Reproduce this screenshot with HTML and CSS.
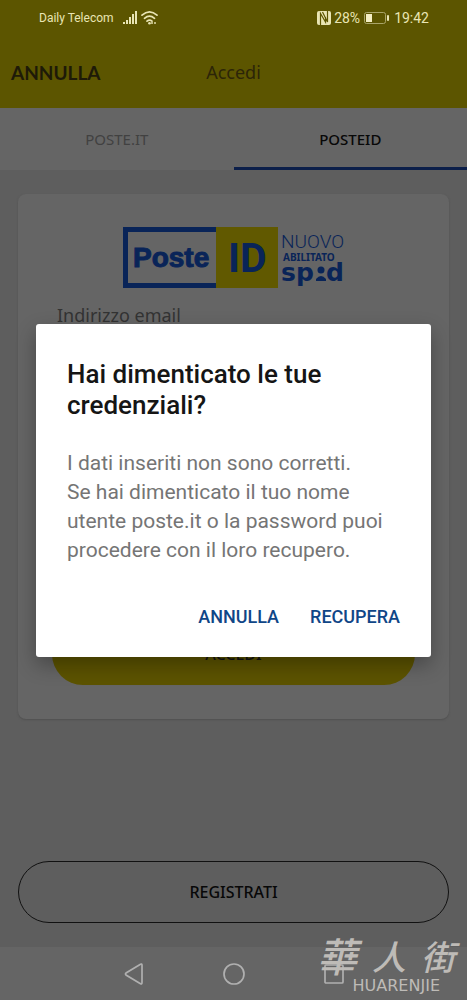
FILE: index.html
```html
<!DOCTYPE html>
<html lang="it">
<head>
<meta charset="utf-8">
<meta name="viewport" content="width=device-width, initial-scale=1">
<title>Accedi</title>
<link rel="stylesheet" href="styles.css">
</head>
<body>
<div class="screen">
  <header class="top">
    <div class="status">
      <span class="carrier">Daily Telecom</span>
      <svg class="signal" width="35" height="16" viewBox="0 0 35 16" aria-hidden="true">
        <g fill="#e9e5b4"><rect x="0" y="12" width="2" height="2"/><rect x="3" y="10" width="2" height="4"/><rect x="6" y="7" width="2" height="7"/><rect x="9" y="4" width="2" height="10"/><rect x="12" y="1" width="2" height="13"/></g>
        <g fill="none" stroke="#e9e5b4" stroke-width="1.7" stroke-linecap="round"><path d="M19 5.2Q26.500-1.500 34 5.200M21.500 8.300Q26.500 4 31.500 8.300M24 11.200Q26.500 9 29 11.200"/></g>
        <circle cx="26.500" cy="13.200" r="1.300" fill="#e9e5b4"/><path d="M29 14v-2M32 14v-2" stroke="#e9e5b4" stroke-width="1.400"/>
      </svg>
      <span class="spacer"></span>
      <svg width="14" height="14" viewBox="0 0 14 14" aria-hidden="true">
        <rect width="14" height="14" rx="2" fill="#e9e5b4"/>
        <path d="M3.500 14V2.500L8.500 11V6M5.500 1L10.500 11V0" fill="none" stroke="#5c5500" stroke-width="1.200"/>
      </svg>
      <span class="pct">28%</span>
      <svg class="battery" width="26" height="12" viewBox="0 0 26 12" aria-hidden="true">
        <rect x=".5" y=".5" width="21" height="11" rx="2" fill="none" stroke="#a9a468"/>
        <rect x="2" y="2" width="6" height="8" fill="#f4eec4"/><rect x="23" y="3" width="2" height="6" rx="1" fill="#e9e5b4"/>
      </svg>
      <span class="clock">19:42</span>
    </div>
    <div class="appbar">
      <button class="cancel" type="button">ANNULLA</button>
      <h1 class="title">Accedi</h1>
    </div>
  </header>
  <nav class="tabs">
    <button class="tab" type="button">POSTE.IT</button>
    <button class="tab tab-active" type="button">POSTEID</button>
  </nav>
  <main class="content">
    <form class="card">
      <svg class="brand" width="222" height="62" viewBox="0 0 222 62" role="img" aria-label="PosteID">
        <path d="M93 2.500H2.500V58.500H93" fill="none" stroke="#092458" stroke-width="5"/>
        <rect x="93" y="0" width="62" height="61" fill="#615900"/>
        <g fill="#092458">
          <text class="logo-poste" x="10" y="40">Poste</text>
          <text class="logo-id" x="105" y="45">ID</text>
          <text class="logo-nuovo" x="158" y="21">NUOVO</text>
          <text class="logo-abil" x="160" y="34">ABILITATO</text>
          <text class="logo-spid" x="158" y="54">sp</text>
          <text class="logo-spid" x="203" y="54">d</text>
          <circle cx="198" cy="43" r="3.500"/><path d="M193 54v-2q5-6 10 0v2z"/>
        </g>
      </svg>
      <label class="field-label" for="email">Indirizzo email</label>
      <input class="field" id="email" type="email">
      <button class="login" type="button">ACCEDI</button>
    </form>
    <button class="register" type="button">REGISTRATI</button>
  </main>
  <footer class="sysnav">
    <svg width="20" height="24" viewBox="0 0 20 24" aria-hidden="true"><path d="M18 3V20.500Q18 22.500 16.500 21.700L2 13Q1 12 2 11L16.500 2.300Q18 1.500 18 3" fill="none" stroke="#b0b0b0" stroke-width="1.700"/></svg>
    <svg width="24" height="24" viewBox="0 0 24 24" aria-hidden="true"><circle cx="12" cy="12" r="10" fill="none" stroke="#b0b0b0" stroke-width="1.700"/></svg>
    <svg width="20" height="24" viewBox="0 0 20 24" aria-hidden="true"><rect x="1" y="3" width="18" height="18" rx="1" fill="none" stroke="#b0b0b0" stroke-width="1.700"/></svg>
  </footer>
  <div class="watermark"><span class="wm-cjk" lang="zh-Hant"><span class="wm-big">華</span><span>人</span><span>街</span></span><span class="wm-latin">HUARENJIE</span></div>
  <div class="overlay">
    <section class="dialog" role="alertdialog" aria-labelledby="dlg-title" aria-describedby="dlg-text">
      <h2 class="dialog-title" id="dlg-title">Hai dimenticato le tue credenziali?</h2>
      <p class="dialog-text" id="dlg-text">I dati inseriti non sono corretti.<br>Se hai dimenticato il tuo nome utente poste.it o la password puoi procedere con il loro recupero.</p>
      <div class="dialog-actions">
        <button class="action" type="button">ANNULLA</button>
        <button class="action" type="button">RECUPERA</button>
      </div>
    </section>
  </div>
</div>
</body>
</html>
```

FILE: styles.css
```css
* { box-sizing: border-box; }
body { margin: 0; background: #5e5e5e; font-family: "Noto Sans", sans-serif; color: #151515; }
button { border: 0; padding: 0; background: none; color: inherit; font: inherit; cursor: pointer; }
h1, h2, p { margin: 0; }
.screen { position: relative; min-height: 100vh; display: flex; flex-direction: column; }
.top { background: #5c5500; }
.status { display: flex; align-items: center; height: 36px; padding: 0 38px 0 39px; font-family: Roboto, sans-serif; font-size: 14px; color: #e9e5b4; }
.carrier { font-size: 12px; }
.signal { margin-left: 9px; }
.spacer { flex: 1; }
.pct { margin-left: 3px; }
.battery { margin: 0 4px; }
.appbar { display: grid; grid-template-columns: 1fr auto 1fr; align-items: center; height: 72px; padding: 0 11px; }
.cancel { justify-self: start; font-family: Lato, sans-serif; font-size: 19px; font-weight: 700; color: #1e1a08; }
.title { font-size: 18px; font-weight: 400; color: #2c2508; }
.tabs { display: flex; height: 62px; background: #656565; }
.tab { flex: 1; padding-top: 3px; font-family: "Noto Sans", sans-serif; font-size: 15px; color: #414141; border-bottom: 3px solid transparent; }
.tab-active { color: #080808; font-weight: 500; border-bottom-color: #0c1f4a; }
.content { flex: 1; display: flex; flex-direction: column; justify-content: space-between; padding: 24px 18px; }
.card { display: flex; flex-direction: column; height: 525px; padding: 33px 34px 34px; border-radius: 8px; background: #656565; box-shadow: 0 1px 2px #505050; }
.brand { align-self: center; }
.field-label { margin: 13px 5px 0; font-size: 18px; line-height: 26px; color: #333333; }
.field { margin: 0 5px; height: 40px; border: 0; border-bottom: 1px solid #444444; background: none; }
.login { margin-top: auto; height: 62px; border-radius: 31px; background: #5c5300; font-size: 16px; font-weight: 500; }
.register { height: 62px; border: 1px solid #111111; border-radius: 31px; font-size: 16px; font-weight: 500; color: #080808; }
.sysnav { display: flex; justify-content: center; align-items: center; gap: 78px; height: 53px; background: #656565; }
.logo-poste { font: 700 28px "Liberation Sans", sans-serif; stroke: #092458; stroke-width: 1px; }
.logo-id { font: 700 41px Roboto, sans-serif; }
.logo-nuovo { font: 300 19px Roboto, sans-serif; }
.logo-abil { font: 700 10px "Noto Sans", sans-serif; }
.logo-spid { font: 700 25px "DejaVu Sans", sans-serif; }
.overlay { position: absolute; inset: 0; display: flex; align-items: center; padding: 0 36px 19px; }
.dialog { flex: 1; padding: 35px 31px 25px; border-radius: 3px; background: #ffffff; box-shadow: 0 8px 20px rgba(0, 0, 0, .3); font-family: Roboto, sans-serif; }
.dialog-title { font-size: 26px; line-height: 31px; font-weight: 500; color: #151515; }
.dialog-text { margin-top: 28px; font-size: 21px; line-height: 29px; color: #757575; }
.dialog-actions { display: flex; justify-content: flex-end; gap: 31px; margin-top: 35px; }
.action { height: 32px; font-size: 18px; font-weight: 500; color: #104687; }
.watermark { position: absolute; right: 12px; bottom: 7px; display: flex; flex-direction: column; color: #bebbb7; line-height: 1; }
.wm-cjk { display: flex; align-items: flex-end; justify-content: space-between; width: 138px; font: italic 500 34px/44px "Noto Sans CJK TC", sans-serif; }
.wm-big { font-size: 40px; line-height: 46px; }
.wm-latin { align-self: flex-end; margin-right: 15px; font: 400 16px/15px "DejaVu Sans", sans-serif; }
```
